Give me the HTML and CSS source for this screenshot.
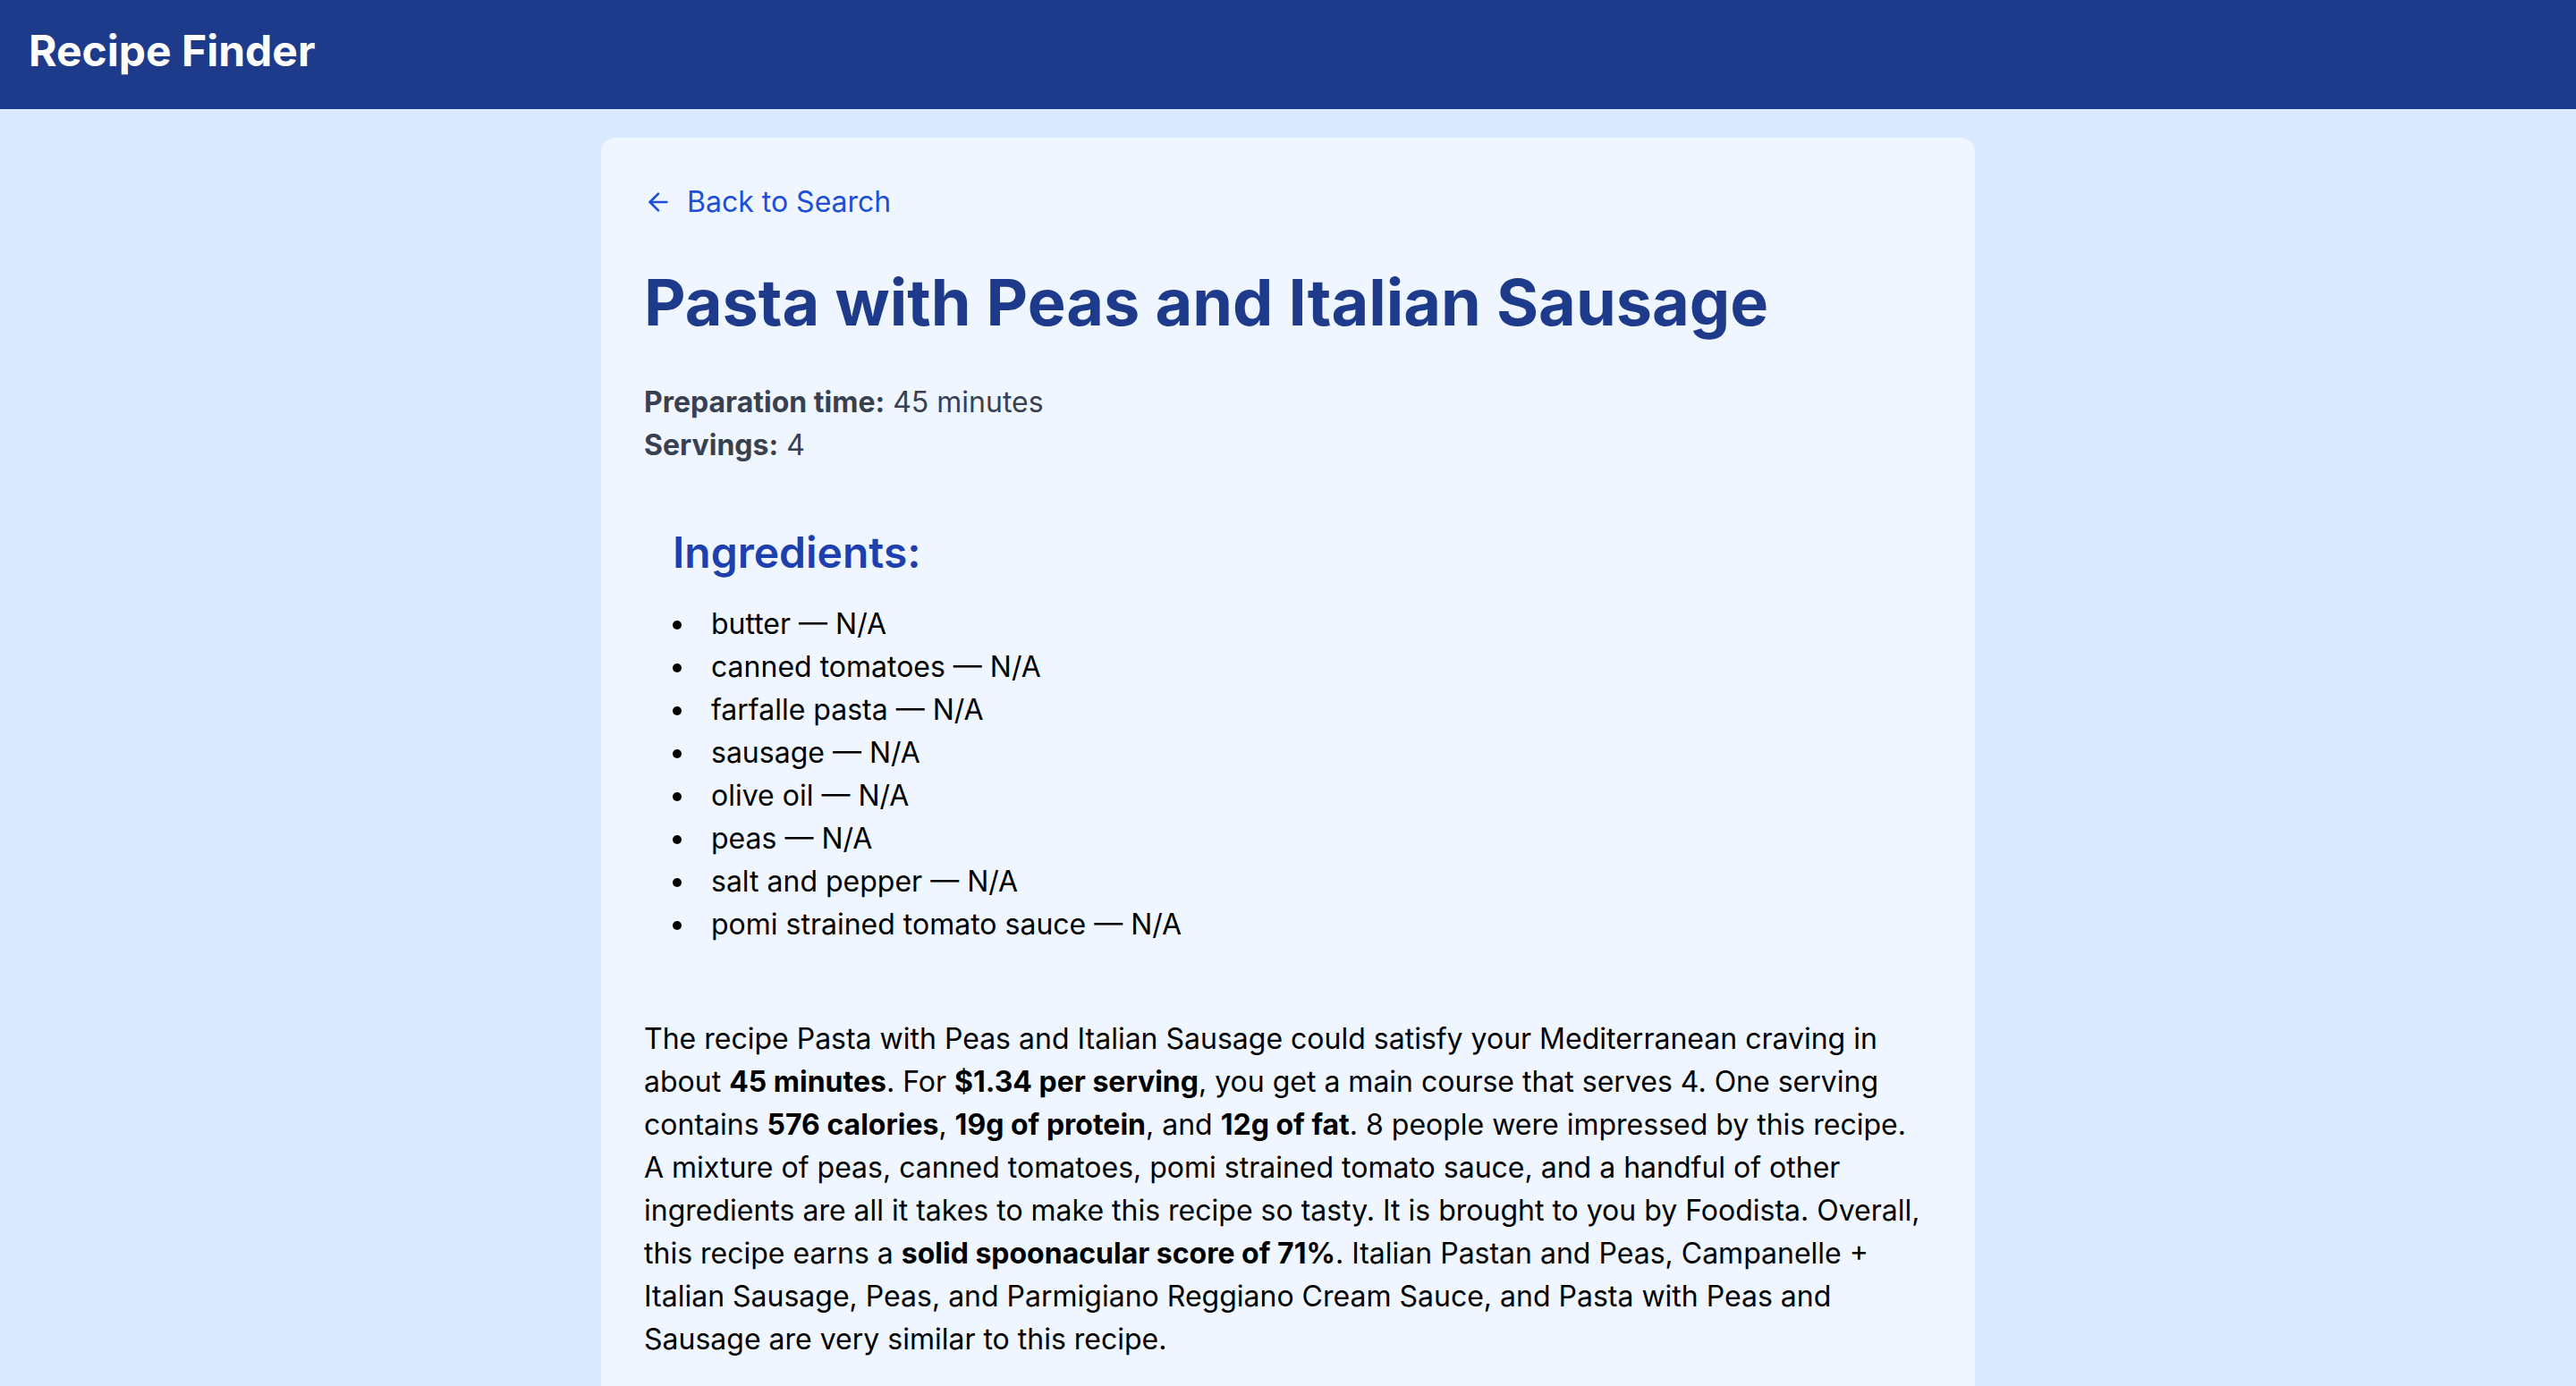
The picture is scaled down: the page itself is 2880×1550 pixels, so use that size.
FILE: index.html
```html
<!DOCTYPE html>
<html lang="en">
<head>
<meta charset="utf-8">
<title>Recipe Finder</title>
<link rel="stylesheet" href="styles.css">
</head>
<body>
<header class="topbar">
  <h1 class="brand">Recipe Finder</h1>
</header>
<main class="page">
  <article class="card">
    <a class="back" href="#">
      <svg class="back-icon" viewBox="0 0 24 24" fill="none" stroke="currentColor" stroke-width="2" stroke-linecap="round" stroke-linejoin="round"><path d="m12 19-7-7 7-7"/><path d="M19 12H5"/></svg>
      <span>Back to Search</span>
    </a>
    <h2 class="title">Pasta with Peas and Italian Sausage</h2>
    <div class="meta">
      <p><strong>Preparation time:</strong> 45 minutes</p>
      <p><strong>Servings:</strong> 4</p>
    </div>
    <section class="ingredients">
      <h3 class="ing-title">Ingredients:</h3>
      <ul class="ing-list">
        <li>butter — N/A</li>
        <li>canned tomatoes — N/A</li>
        <li>farfalle pasta — N/A</li>
        <li>sausage — N/A</li>
        <li>olive oil — N/A</li>
        <li>peas — N/A</li>
        <li>salt and pepper — N/A</li>
        <li>pomi strained tomato sauce — N/A</li>
      </ul>
    </section>
    <p class="summary">The recipe Pasta with Peas and Italian Sausage could satisfy your Mediterranean craving in about <b>45 minutes</b>. For <b>$1.34 per serving</b>, you get a main course that serves 4. One serving contains <b>576 calories</b>, <b>19g of protein</b>, and <b>12g of fat</b>. 8 people were impressed by this recipe. A mixture of peas, canned tomatoes, pomi strained tomato sauce, and a handful of other ingredients are all it takes to make this recipe so tasty. It is brought to you by Foodista. Overall, this recipe earns a <b>solid spoonacular score of 71%</b>. Italian Pastan and Peas, Campanelle + Italian Sausage, Peas, and Parmigiano Reggiano Cream Sauce, and Pasta with Peas and Sausage are very similar to this recipe.</p>
  </article>
</main>
</body>
</html>
```
FILE: styles.css
```css
* { box-sizing: border-box; }
html, body {
  margin: 0;
  padding: 0;
}
body {
  background: #dbeafe;
  font-family: Inter, "Liberation Sans", sans-serif;
  color: #000;
  font-size: 32px;
  line-height: 48px;
}
.topbar {
  background: #1e3a8a;
  height: 122px;
  padding: 25px 32px 0;
}
.brand {
  margin: 0;
  color: #fff;
  font-size: 48px;
  line-height: 64px;
  font-weight: 700;
}
.page {
  padding: 32px 0;
}
.card {
  width: 1536px;
  margin: 0 auto;
  background: #eff6ff;
  border-radius: 16px;
  padding: 48px;
}
.back {
  display: flex;
  width: fit-content;
  align-items: center;
  gap: 16px;
  color: #1d4ed8;
  text-decoration: none;
  font-size: 32px;
  line-height: 48px;
  height: 48px;
}
.back-icon {
  width: 32px;
  height: 32px;
  flex: none;
}
.title {
  margin: 48px 0 48px;
  color: #1e3a8a;
  font-size: 72px;
  line-height: 80px;
  font-weight: 700;
}
.meta {
  color: #374151;
}
.meta p { margin: 0; }
.meta strong { font-weight: 700; }
.ingredients {
  margin-top: 32px;
  padding: 32px;
}
.ing-title {
  margin: 0 0 24px;
  color: #1e40af;
  font-size: 48px;
  line-height: 64px;
  font-weight: 600;
}
.ing-list {
  margin: 0;
  padding: 0;
  list-style: disc inside;
}
.summary {
  margin: 48px 0 0;
}
.summary b { font-weight: 700; }
```
